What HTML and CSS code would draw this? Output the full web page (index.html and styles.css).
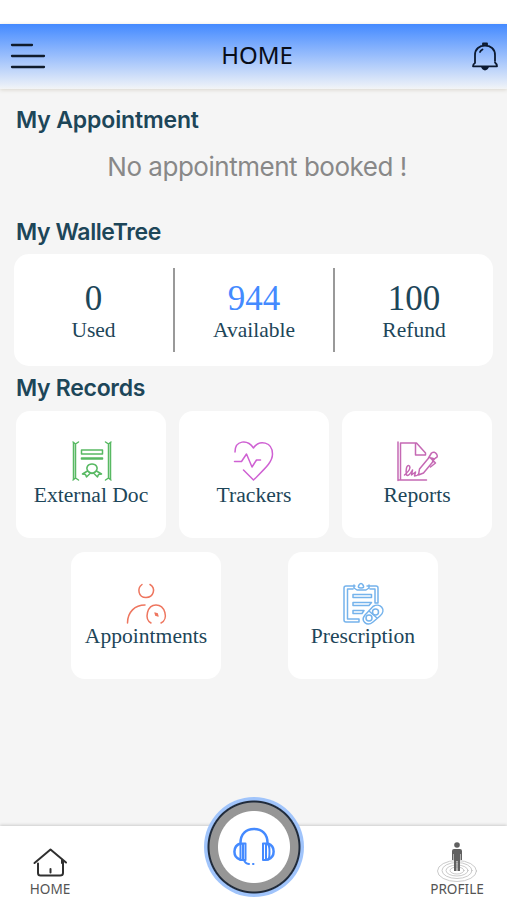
FILE: index.html
```html
<!DOCTYPE html>
<html lang="en">
<head>
<meta charset="utf-8">
<title>Home</title>
<link rel="stylesheet" href="styles.css">
</head>
<body>
<div class="app">
  <header class="topbar">
    <svg class="menu" width="36" height="28" viewBox="0 0 36 28"><path d="M2 3H22M2 14H34M2 25H34"/></svg>
    <h1>HOME</h1>
    <svg class="bell" width="28" height="30" viewBox="0 0 28 30"><path d="M4 22V14C4 8 8.500 4.500 14 4.500S24 8 24 14V20M4 22Q2 23 2 25.300H26Q26 23 24 21.500M12 4V2.500H16V4"/><path d="M9 11Q9.600 9.500 11.500 8.500"/><path class="clapper" d="M11 26H17Q16 28.500 14 28.500T11 26Z"/></svg>
  </header>
  <main>
    <h2 class="appointment-title">My Appointment</h2>
    <p class="empty">No appointment booked !</p>
    <h2 class="wallet-title">My WalleTree</h2>
    <section class="wallet">
      <div class="stat"><strong>0</strong><span>Used</span></div>
      <div class="stat available"><strong>944</strong><span>Available</span></div>
      <div class="stat"><strong>100</strong><span>Refund</span></div>
    </section>
    <h2 class="records-title">My Records</h2>
    <section class="records">
      <a class="card">
        <svg class="doc" viewBox="1 0 60 60"><path d="M13 12L15.500 14V48L13 50M13.500 13V49M51 12L48.500 14V48L51 50M50.500 13V49M15.500 14L18.500 12M15.500 48L18.500 50M48.500 14L45.500 12M48.500 48L45.500 50"/><path d="M21.500 20H42.500V24H21.500ZM21.500 28H42.500V29H21.500ZM32 34C36.500 34 38.500 38 36 41C33.500 44 30 43 28 41C25.500 38 27.500 34 32 34ZM27.500 41L22.500 44L25.500 44.500L26.500 47L30.500 43M36.500 41L41.500 44L38.500 44.500L37.500 47L33.500 43M28.500 42Q32 45 35.500 42"/></svg>
        <span>External Doc</span>
      </a>
      <a class="card">
        <svg class="heart" viewBox="-.5 0 60 60"><path d="M10.500 22C10.500 10 23 9 29 18C35 9 48 12 48 24C48 32 41 38 29 50L19 40M10 31.500H17L22 24L27.500 37L32 30H36"/></svg>
        <span>Trackers</span>
      </a>
      <a class="card">
        <svg class="report" viewBox="1.500 0 60 60"><path d="M12.500 12V50.500M13 50H41M15 49V13H31L40 23V25H30V14M19 45Q26 39 24 36C21 34 20 40 21 45Q23 47 27 40L26 45L30 42L29 46Q32 46 33 44M33 45L34 39L44 27L48 31L38 43L33 45ZM43 28L46 23Q49 21 51 24T50 28L47 31M46 28L49 29M48 31L50 33L45 37"/></svg>
        <span>Reports</span>
      </a>
    </section>
    <section class="records second">
      <a class="card">
        <svg class="person" viewBox="1 0 60 60"><path d="M27 13.500C22 17 23 26.500 31 26.500S41 17 35 13.500M12.500 52C12.500 41 20 34 30 34M36 52C29 48 32 34 41 34S54 48 46 52M40 42L43 45"/><circle cx="41.500" cy="43.500" r="1"/></svg>
        <span>Appointments</span>
      </a>
      <a class="card">
        <svg class="clip" viewBox="0 0 60 60"><path d="M22 15H13Q11 15 11 17V49Q11 51 13 51H26V48H14.500V18H20M34 15H43Q45 15 45 17V32H42V18H37M21 14V17L24 19H33L36 17V14M26 14Q28 11 30 14T28 17T26 14M20 23.500H38.500V26.500H20ZM20 31.500H38.500L36 34.500H20ZM20 39.500H31L29 42.500H20ZM32 44L40 35.500C47 31 54 39 47 45L40 51C34 56 27 50 32 44ZM36 40L44 47"/><circle cx="42.500" cy="41" r="3"/><circle cx="36" cy="47" r="3"/></svg>
        <span>Prescription</span>
      </a>
    </section>
  </main>
  <nav class="tabs">
    <a class="tab">
      <svg class="house" width="36" height="32" viewBox="0 0 36 32"><path d="M2.500 16L18.500 2.500L34 15.500M6 16.500V26Q6 28.500 8.500 28.500H28Q31 28.500 31 26V13M30 12V16"/><path class="door" d="M18.500 22V25.500"/></svg>
      <span>HOME</span>
    </a>
    <a class="support">
      <svg width="44" height="42" viewBox="0 0 44 42"><path d="M8.500 18V17C8.500 8 14 3 22 3S35.500 8 35.500 17V18M8.500 17.500C.5 20 .5 31 8 33.500M36 17.500C43.500 20 43.500 31 36 33.500"/><path class="cup" d="M8.500 17.500H13.500V34H8.500ZM31 17.500H34.500C37 17.500 37.500 20 37.500 26S37 34 34.500 34H31ZM11 18V34M34 18V34M12 34Q13 37.500 17 38M21 38H21.500"/></svg>
    </a>
    <a class="tab profile">
      <svg width="42" height="42" viewBox="0 0 42 42"><g class="ripples"><ellipse cx="21" cy="30" rx="19.500" ry="10.500"/><ellipse cx="21" cy="29.500" rx="15" ry="8"/><ellipse cx="21" cy="29.500" rx="11" ry="5.500"/><ellipse cx="21" cy="29.500" rx="7" ry="3.500"/></g><circle cx="21" cy="4" r="2.800"/><path class="figure" d="M18 8H24Q26 8 26 10V19H24.500V13H24V30H21.500V20H20.500V30H18V13H17.500V19H16V10Q16 8 18 8Z"/></svg>
      <span>PROFILE</span>
    </a>
  </nav>
</div>
</body>
</html>
```

FILE: styles.css
```css
* { box-sizing: border-box; }
body { margin: 0; background: #fff; }
svg { fill: none; stroke-linecap: round; stroke-linejoin: round; display: block; }
.app { width: 507px; height: 900px; padding-top: 24px; display: flex; flex-direction: column; overflow: hidden; }
.topbar {
  height: 65px; padding: 0 8px 1px 10px; display: flex; justify-content: space-between; align-items: center;
  background: linear-gradient(#448aff, #9bbffc 50%, #e9eff8 95%, #f3f4f5);
  box-shadow: 0 1px 4px #d9d6cd; z-index: 1;
}
h1 { margin: 0 3px 3px 0; font: 400 24px/32px "Noto Sans", sans-serif; color: #080d18; }
.menu { stroke: #101c2c; stroke-width: 2.3; }
.bell { stroke: #0c1a30; stroke-width: 1.8; }
.clapper { fill: #0c1a30; }
main { flex: 1; background: #f5f5f5; padding: 16px 14px 0; }
h2 { margin: 0 0 0 2px; font: 600 23px/30px Inter, sans-serif; letter-spacing: -.15px; color: #1d4659; white-space: nowrap; }
.empty { margin: 14px 0 0 1px; padding-left: 6px; text-align: center; font: 400 26px/36px Inter, sans-serif; letter-spacing: -.48px; color: #888; white-space: nowrap; }
.wallet-title { margin-top: 32px; letter-spacing: -.4px; }
.wallet { margin-top: 7px; height: 112px; border-radius: 15px; background: #fff; display: grid; grid-template-columns: 161px 160px 158px; align-items: center; }
.stat { height: 84px; padding-top: 13px; display: flex; flex-direction: column; align-items: center; border-right: 2px solid #999; color: #1d4659; font-family: "Liberation Serif", serif; }
.stat:last-child { border-right: 0; }
.stat strong { font-size: 35px; line-height: 36px; font-weight: 400; }
.stat span { font-size: 21.5px; line-height: 26px; }
.available strong { color: #448aff; }
.records-title { margin-top: 7px; letter-spacing: -.3px; }
.records { margin: 8px 1px 0 2px; display: flex; justify-content: space-between; }
.second { margin: 14px 54px 0 57px; }
.second .card:last-child { margin-right: 1px; }
.card { width: 150px; height: 127px; padding-top: 19px; border-radius: 14px; background: #fff; display: flex; flex-direction: column; align-items: center; color: #1d4659; font: 21.6px/26px "Liberation Serif", serif; white-space: nowrap; }
.card svg { width: 60px; height: 60px; margin-bottom: -8px; flex: none; stroke-width: 1.5; }
.doc { stroke: #58b963; }
.heart { stroke: #cf61d3; }
.report { stroke: #c569b4; }
.person { stroke: #ee765f; }
.clip { stroke: #75b3ec; }
.tabs { height: 74px; background: #fff; box-shadow: 0 -1px 3px #ccc; display: flex; justify-content: space-between; position: relative; }
.tab { width: 100px; display: flex; flex-direction: column; align-items: center; padding-top: 21px; font: 13.6px/18px "Noto Sans", sans-serif; color: #555; }
.tab span { margin-top: 1px; }
.house { stroke: #303030; stroke-width: 2; }
.profile { padding-top: 15px; }
.profile circle, .figure { fill: #606060; }
.profile span { margin-top: -3px; }
.ripples { stroke: #bdbdbd; stroke-width: .8; }
.support { position: absolute; left: 204px; top: -29px; width: 100px; height: 100px; border-radius: 50%; display: flex; align-items: center; justify-content: center; background: radial-gradient(circle, #fff 35.5px, #969696 36.5px 44px, #202b3b 45px 46px, #a0c4fb 47px); }
.support svg { stroke: #448aff; stroke-width: 2.5; }
.support .cup { stroke-width: 2; }
```
